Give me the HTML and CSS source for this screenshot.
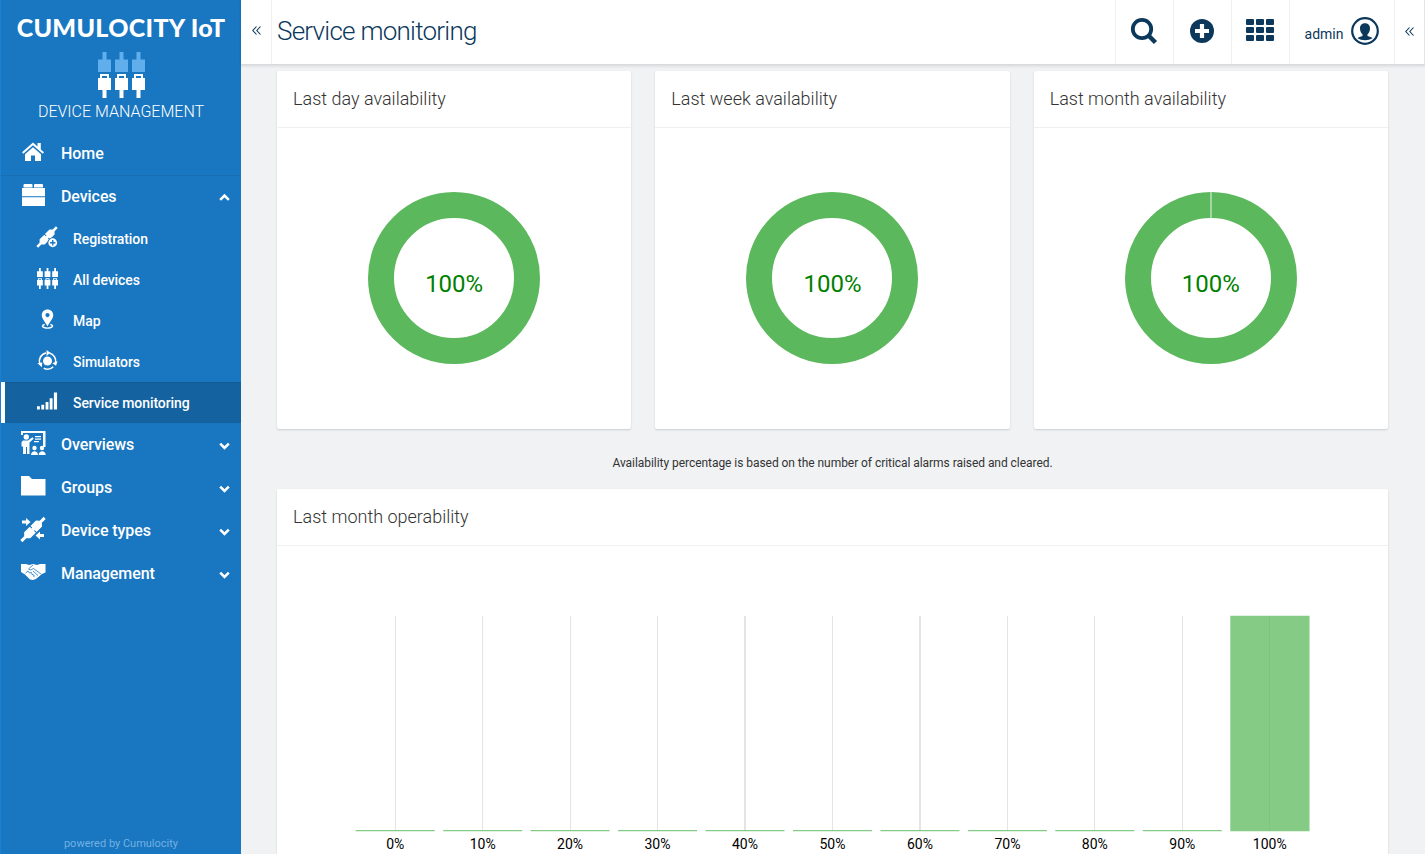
FILE: index.html
```html
<!DOCTYPE html>
<html lang="en">
<head>
<meta charset="utf-8">
<title>Service monitoring</title>
<link rel="stylesheet" href="styles.css">
</head>
<body>
<svg class="defs" width="0" height="0">
  <defs>
    <g id="plug-up"><path d="M4.500 0h4v7.500H13V20H0V7.500h4.500z"/></g>
    <g id="plug-down"><path fill-rule="evenodd" d="M2 0h9v4h2v12H8.500v8h-4v-8H0V4h2zM4 2v2h5V2z"/></g>
    <g id="plugs"><path d="M-1.500-16.500h3v5.500L4.300-8.500v7.700h-8.600v-7.700L-1.500-11zM-4.300.3h2.500v-1.600h3.600V.3h2.500v7.900L1.500 11v5.500h-3V11l-2.800-2.800z"/></g>
    <g id="chev"><path d="M1.200 1.700 5.500 6l4.300-4.300" fill="none" stroke="#fff" stroke-width="2.500"/></g>
    <g id="laquo" fill="none" stroke="#0b385b" stroke-width="1.100"><path d="M4.500.5.800 4.500l3.700 4M8.500.5 4.800 4.500l3.700 4"/></g>
  </defs>
</svg>
<div class="app">
  <nav class="sidebar">
    <div class="brand">
      <div class="brand-name">CUMULOCITY IoT</div>
      <svg class="brand-icon" width="47" height="47" viewBox="0 0 47 47">
        <g fill="#60aeec"><use href="#plug-up"/><use href="#plug-up" x="17"/><use href="#plug-up" x="34"/></g>
        <g fill="#fff"><use href="#plug-down" y="22"/><use href="#plug-down" x="17" y="22"/><use href="#plug-down" x="34" y="22"/></g>
      </svg>
      <div class="brand-app">DEVICE MANAGEMENT</div>
    </div>
    <a class="item ruled">
      <svg class="icon" viewBox="0 0 24 24"><path d="M12 2.500 1 12.300l1.300 1.500L12 5.300l9.700 8.500 1.300-1.500-3.200-2.900V3h-3.300v3.500z"/><path d="M12 7.200 4 14.200V21h6v-5.500h4V21h6v-6.800z"/></svg>
      <span>Home</span>
    </a>
    <a class="item">
      <svg class="icon" viewBox="0 0 24 24"><path d="M2.500 2Q2.500 1 3.500 1h7q1 0 1 1v2.500H2.500zM13 2q0-1 1-1h7q1 0 1 1v2.500h-9zM1 5h23v8.300H1zM1 14.300h23V23H1z"/></svg>
      <span>Devices</span>
      <svg class="chev" viewBox="0 0 11 8"><use href="#chev" transform="translate(0 7.500) scale(1 -1)"/></svg>
    </a>
    <a class="item sub">
      <svg class="icon" viewBox="0 0 22 22"><use href="#plugs" transform="translate(10.500 10.500) rotate(45) scale(.88)"/><circle cx="16.500" cy="16.500" r="5.600" fill="#1976c0"/><circle cx="16.500" cy="16.500" r="4.600"/><path d="M16.500 13.700v5.600M13.700 16.500h5.600" stroke="#1976c0" stroke-width="1.400"/></svg>
      <span>Registration</span>
    </a>
    <a class="item sub">
      <svg class="icon" viewBox="0 0 47 47"><use href="#plug-up"/><use href="#plug-up" x="17"/><use href="#plug-up" x="34"/><use href="#plug-down" y="23"/><use href="#plug-down" x="17" y="23"/><use href="#plug-down" x="34" y="23"/></svg>
      <span>All devices</span>
    </a>
    <a class="item sub">
      <svg class="icon" viewBox="0 0 22 22"><path fill-rule="evenodd" d="M11 .5c3.500 0 6 2.500 6 6 0 3.200-3.500 7-6 11.500C8.500 13.500 5 9.700 5 6.500c0-3.500 2.500-6 6-6zm0 3.700a2.200 2.200 0 1 0 0 4.400 2.200 2.200 0 0 0 0-4.400z"/><path d="M8 16.200c-4 1-2.500 3.800 3 3.800s7-2.800 3-3.800" fill="none" stroke="#fff" stroke-width="1.500"/></svg>
      <span>Map</span>
    </a>
    <a class="item sub">
      <svg class="icon" viewBox="0 0 22 22"><circle cx="11" cy="11.500" r="4.700"/><g fill="none" stroke="#fff" stroke-width="1.700"><path d="M13 3.200a8.500 8.500 0 0 1 6.400 10M17 17.500a8.500 8.500 0 0 1-10 1.500M3 14.500A8.500 8.500 0 0 1 9.500 3.200"/></g><path d="M10 0l4 3-4 3.200zM21.500 11.500l-1.500 5-4-2.500zM.5 14l5-.8-.5 5z"/></svg>
      <span>Simulators</span>
    </a>
    <a class="item sub active">
      <svg class="icon" viewBox="0 0 22 22"><path d="M0 16h3v3.500H0zM4.500 14.500h3v5h-3zM9 11.500h3v8H9zM13.300 7.500h3v12h-3zM17.700 1.500H21v18h-3.300z"/></svg>
      <span>Service monitoring</span>
    </a>
    <a class="item">
      <svg class="icon" viewBox="0 0 24 24"><path d="M0 0h24.500v16H22V2H2v2H0z"/><circle cx="5.300" cy="6" r="2.700"/><path d="M2 9.500h5l4.500-3.300 1.200 1.500-4.200 3.800V23H6v-7H5v7H2v-7.500H.5V11zM14 5h6v1.200h-6zM14 7.500h6v1.200h-6zM13 10h5v1.200h-5z"/><circle cx="13.500" cy="17" r="2.200"/><circle cx="21" cy="17" r="2.200"/><path d="M10 24c0-5 7-5 7 0zM17.700 24c0-5 7-5 7 0z"/></svg>
      <span>Overviews</span>
      <svg class="chev" viewBox="0 0 11 8"><use href="#chev"/></svg>
    </a>
    <a class="item">
      <svg class="icon" viewBox="0 0 24 24"><path d="M0 2h8l3 3h13.500v16.500H0z"/></svg>
      <span>Groups</span>
      <svg class="chev" viewBox="0 0 11 8"><use href="#chev"/></svg>
    </a>
    <a class="item">
      <svg class="icon" viewBox="0 0 24 24"><use href="#plugs" transform="translate(12 12.500) rotate(45)"/><path d="M1 3.500h4V1l4.500 4L5 9V6.500H1zM23 17h-4v-2.500l-4.500 4 4.500 4V20h4z"/></svg>
      <span>Device types</span>
      <svg class="chev" viewBox="0 0 11 8"><use href="#chev"/></svg>
    </a>
    <a class="item">
      <svg class="icon" viewBox="0 0 24 24"><path d="M0 4h5l3 1 4-1 4 1 3-1h5.500v8.500L21 14l-6 5-3 1-3-.5-5-5L0 12z"/><path d="M4.500 13 7 11l1.500 2 2-.5.5 2 2 .5v2M12 5l-4.500 4q2 2.200 5-.5l7.500 5.500M12 11l5 4.500" fill="none" stroke="#1976c0" stroke-width=".8"/></svg>
      <span>Management</span>
      <svg class="chev" viewBox="0 0 11 8"><use href="#chev"/></svg>
    </a>
    <div class="powered">powered by Cumulocity</div>
  </nav>

  <div class="content">
    <header class="topbar">
      <div class="cell collapse"><svg width="9" height="9" viewBox="0 0 9 9"><use href="#laquo"/></svg></div>
      <h1>Service monitoring</h1>
      <div class="cell tool"><svg width="28" height="28" viewBox="0 0 28 28" fill="none" stroke="#0b385b"><circle cx="12" cy="12" r="9.200" stroke-width="3.800"/><path d="M18.500 18.500l7 7" stroke-width="4.500"/></svg></div>
      <div class="cell tool"><svg width="26" height="26" viewBox="0 0 26 26"><circle cx="13" cy="13" r="12" fill="#0b385b"/><path d="M13 6v14M6 13h14" stroke="#fff" stroke-width="4.200"/></svg></div>
      <div class="cell tool"><svg class="apps" width="28" height="24" viewBox="0 0 28 24" fill="#0b385b"><rect y="1" width="8" height="6" rx="1"/><rect x="10" y="1" width="8" height="6" rx="1"/><rect x="20" y="1" width="8" height="6" rx="1"/><rect y="9" width="8" height="6" rx="1"/><rect x="10" y="9" width="8" height="6" rx="1"/><rect x="20" y="9" width="8" height="6" rx="1"/><rect y="17" width="8" height="6" rx="1"/><rect x="10" y="17" width="8" height="6" rx="1"/><rect x="20" y="17" width="8" height="6" rx="1"/></svg></div>
      <div class="cell user"><span>admin</span><svg width="28" height="28" viewBox="0 0 28 28"><circle cx="14" cy="14" r="12.800" fill="none" stroke="#0b385b" stroke-width="2.200"/><path d="M14 6.300c3.300 0 5 2.100 5 5.200 0 2.400-1 4.500-2.500 5.700v1.800c2 .8 4 1 5 2.300-4 2.500-11 2.500-15 0 1-1.300 3-1.500 5-2.300v-1.800C10 16 9 13.900 9 11.500c0-3.100 1.700-5.200 5-5.200z" fill="#0b385b"/></svg></div>
      <div class="cell drawer"><svg width="9" height="9" viewBox="0 0 9 9"><use href="#laquo"/></svg></div>
    </header>

    <main class="page">
      <div class="cards">
        <section class="card">
          <h2>Last day availability</h2>
          <div class="donut-box"><div class="donut"><span>100%</span></div></div>
        </section>
        <section class="card">
          <h2>Last week availability</h2>
          <div class="donut-box"><div class="donut"><span>100%</span></div></div>
        </section>
        <section class="card">
          <h2>Last month availability</h2>
          <div class="donut-box"><div class="donut seam"><span>100%</span></div></div>
        </section>
      </div>
      <p class="note">Availability percentage is based on the number of critical alarms raised and cleared.</p>
      <section class="card operability">
        <h2>Last month operability</h2>
        <svg class="chart" width="1111" height="340" viewBox="277 546 1111 340">
          <g fill="#e4e4e4">
            <path d="M395 616h1v215h-1zM482 616h1v215h-1zM570 616h1v215h-1zM657 616h1v215h-1zM744 616h2v215h-2zM832 616h1v215h-1zM919 616h2v215h-2zM1007 616h1v215h-1zM1094 616h1v215h-1zM1182 616h1v215h-1zM1269 616h1v215h-1z"/>
          </g>
          <g fill="#5cb85c" fill-opacity=".75">
            <path d="M355.700 830h79v1.200h-79zM443.200 830h79v1.200h-79zM530.600 830h79v1.200h-79zM618.100 830h79v1.200h-79zM705.500 830h79v1.200h-79zM793 830h79v1.200h-79zM880.400 830h79v1.200h-79zM967.900 830h79v1.200h-79zM1055.300 830h79v1.200h-79zM1142.800 830h79v1.200h-79zM1230.300 615.700h79.200v215.500h-79.200z"/>
          </g>
          <g class="ticks">
            <text x="395.300" y="849">0%</text><text x="482.700" y="849">10%</text><text x="570.100" y="849">20%</text><text x="657.500" y="849">30%</text><text x="745" y="849">40%</text><text x="832.500" y="849">50%</text><text x="919.900" y="849">60%</text><text x="1007.400" y="849">70%</text><text x="1094.800" y="849">80%</text><text x="1182.300" y="849">90%</text><text x="1269.800" y="849">100%</text>
          </g>
        </svg>
      </section>
    </main>
  </div>
</div>
</body>
</html>
```
FILE: styles.css
```css
* { box-sizing: border-box; }
body { margin: 0; font-family: Roboto, "Liberation Sans", sans-serif; color: #333; }
.defs { display: block; height: 0; }
.app { display: flex; height: 854px; overflow: hidden; }

.sidebar { width: 241px; flex: none; display: flex; flex-direction: column; background: #1976c0; border-left: 1px solid #1a80d5; color: #fff; }
.brand { height: 132px; display: flex; flex-direction: column; align-items: center; padding-top: 12px; }
.brand-name { font: 900 25px/30px Lato, sans-serif; letter-spacing: 0.3px; white-space: nowrap; }
.brand-icon { display: block; margin-top: 10px; }
.brand-app { font-size: 16px; font-weight: 300; line-height: 20px; margin-top: 3px; }
.item { height: 43px; display: flex; align-items: center; padding: 0 11px 0 20px; font-size: 16px; font-weight: 500; letter-spacing: -.08px; }
.item.ruled { height: 44px; margin-bottom: -1px; border-bottom: 1px solid #176eb3; }
.item .icon { width: 24px; height: 24px; margin: 0 16px 3px 0; fill: #fff; overflow: visible; flex: none; }
.item span { flex: 1; white-space: nowrap; }
.item .chev { width: 11px; height: 8px; flex: none; margin-top: 3px; }
.item.sub { height: 41px; font-size: 14px; padding-left: 36px; }
.item.sub .icon { width: 21px; height: 21px; margin-right: 15px; }
.item.active { background: #1562a0; border-left: 4px solid #fff; box-shadow: inset 0 1px 0 #13588f; padding-left: 32px; }
.powered { margin-top: auto; padding: 0 0 3px; font-size: 11px; line-height: 14px; text-align: center; color: #73b1e3; }

.content { flex: 1; min-width: 0; display: flex; flex-direction: column; background: #f1f2f4; }
.topbar { height: 65px; flex: none; display: flex; background: #fff; border-bottom: 1px solid #d9dadd; box-shadow: 0 1px 3px rgba(0, 0, 0, .12); color: #0b385b; }
.topbar h1 { margin: 0; flex: 1; font-size: 26px; font-weight: 300; line-height: 63px; padding-left: 5px; letter-spacing: -.75px; }
.cell { display: flex; align-items: center; justify-content: center; border-left: 1px solid #f0f1f2; padding-bottom: 2px; }
.cell.collapse { width: 31px; border-left: 0; border-right: 1px solid #f0f1f2; padding-bottom: 4px; }
.cell.tool { width: 58px; padding-right: 2px; }
.apps { margin-bottom: 2px; }
.cell.user { width: 105px; gap: 8px; font-size: 14px; padding-bottom: 3px; }
.cell.user span { margin-top: 6px; }
.cell.drawer { width: 31px; border-right: 1px solid #e3e4e6; padding-bottom: 1px; }

.page { padding: 6px 37px 0 36px; }
.cards { display: grid; grid-template-columns: repeat(3, 1fr); gap: 24px; }
.card { background: #fff; border-radius: 2px; box-shadow: 0 1px 2px rgba(0, 0, 0, .16); height: 358px; }
.card h2 { margin: 0; height: 57px; border-bottom: 1px solid #f0f0f1; padding-left: 16px; font-size: 18px; font-weight: 300; line-height: 55px; }
.donut-box { height: 300px; display: flex; align-items: center; justify-content: center; }
.donut { position: relative; width: 172px; height: 172px; border: 26.500px solid #5cb85c; border-radius: 50%; display: flex; align-items: center; justify-content: center; }
.donut span { font-size: 24px; line-height: 28px; color: #008000; margin-top: 12px; }
.donut.seam::before { content: ""; position: absolute; left: 59px; top: -26px; width: 2px; height: 26px; background: #a3d6a3; }
.note { margin: 0; height: 60px; padding-top: 27px; font-size: 12px; line-height: 14px; text-align: center; letter-spacing: -.05px; }
.operability { height: 400px; }
.chart { display: block; }
.ticks { font-size: 14px; fill: #000; text-anchor: middle; }
```
